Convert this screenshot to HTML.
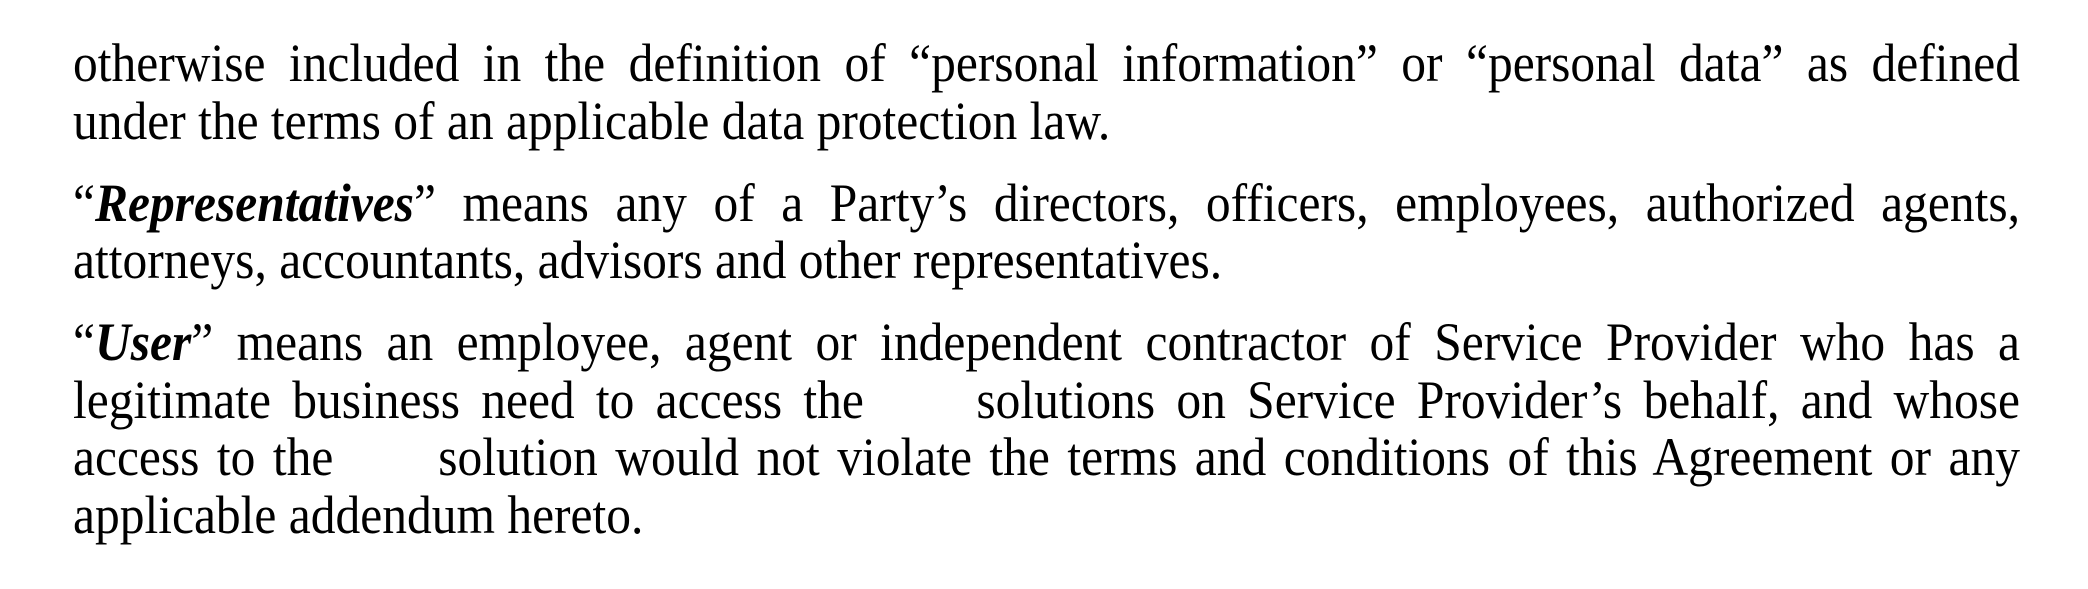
<!DOCTYPE html>
<html><head><meta charset="utf-8"><style>
html,body{margin:0;padding:0;background:#fff;width:2088px;height:589px;overflow:hidden}
body{font-family:"Liberation Serif",serif;font-size:49.5px;color:#000}
.wrap{position:absolute;left:73px;top:35px;width:1947px;line-height:57.5px}
.l{text-align:justify;text-align-last:justify;white-space:normal;transform:scaleY(1.08);transform-origin:50% 60%}
.last{text-align:left;text-align-last:left}
.p{margin-bottom:24.5px}
.gap{display:inline-block;width:70px}
</style></head><body>
<div class="wrap">
<div class="p">
<div class="l">otherwise included in the definition of “personal information” or “personal data” as defined</div>
<div class="l last">under the terms of an applicable data protection law.</div>
</div>
<div class="p">
<div class="l">“<b><i>Representatives</i></b>” means any of a Party’s directors, officers, employees, authorized agents,</div>
<div class="l last">attorneys, accountants, advisors and other representatives.</div>
</div>
<div class="p">
<div class="l">“<b><i>User</i></b>” means an employee, agent or independent contractor of Service Provider who has a</div>
<div class="l">legitimate business need to access the <span class="gap"></span> solutions on Service Provider’s behalf, and whose</div>
<div class="l">access to the <span class="gap"></span> solution would not violate the terms and conditions of this Agreement or any</div>
<div class="l last">applicable addendum hereto.</div>
</div>
</div>
</body></html>
